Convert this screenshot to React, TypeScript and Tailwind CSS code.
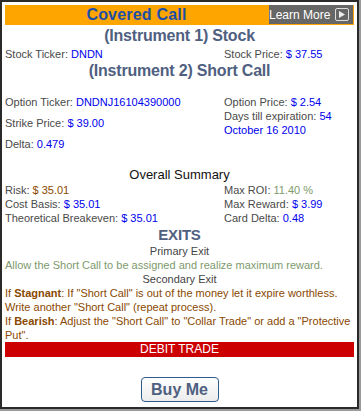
import { Fragment } from "react";

const label = "text-[#4a4a4a]";
const val = "text-[#0000ee]";
const brown = "text-[#8a4800]";
const heading = "text-center font-bold text-[#4f6080] tracking-[-0.2px]";

function Row({ name, value, color = val }: { name: string; value: string; color?: string }) {
  return (
    <div className="whitespace-nowrap">
      <span className={label}>{name}: </span>
      <span className={color}>{value}</span>
    </div>
  );
}

export default function App() {
  return (
    <div
      className="w-[361px] h-[411px] bg-white border-r-2 border-b-2 border-[#9a9a9a]"
      style={{ fontFamily: '"Liberation Sans", Arial, sans-serif' }}
    >
      <div className="h-full border-2 border-[#2a2a2a] px-[3px] pt-[3px] text-[11px] leading-[14px]">
        <div className="relative h-5 bg-[#ffa500] flex items-center justify-center pr-[86px]">
          <span className="text-[16px] font-bold text-[#1c4fa8] tracking-[0.2px]">Covered Call</span>
          <div className="absolute right-[1px] top-0 h-[19px] w-[84px] bg-[#666666] flex items-center justify-end gap-[5px] pr-[4px]">
            <span className="text-white text-[12px] whitespace-nowrap">Learn More</span>
            <span className="w-[14px] h-[13px] border border-[#ddd] rounded-[2px] flex items-center justify-center">
              <svg width="6" height="7" viewBox="0 0 6 7">
                <path d="M0 0 L6 3.5 L0 7 Z" fill="#eee" />
              </svg>
            </span>
          </div>
        </div>

        <div className={`${heading} text-[16px] leading-[22px]`}>(Instrument 1) Stock</div>
        <div className="flex">
          <div className="w-[219px]">
            <Row name="Stock Ticker" value="DNDN" />
          </div>
          <Row name="Stock Price" value="$ 37.55" />
        </div>
        <div className={`${heading} text-[16px] leading-[20px]`}>(Instrument 2) Short Call</div>

        <div className="flex mt-[11px]">
          <div className="w-[219px] leading-[21px]">
            <Row name="Option Ticker" value="DNDNJ16104390000" />
            <Row name="Strike Price" value="$ 39.00" />
            <Row name="Delta" value="0.479" />
          </div>
          <div className="pt-[3px]">
            <Row name="Option Price" value="$ 2.54" />
            <Row name="Days till expiration" value="54" />
            <div className={val}>October 16 2010</div>
          </div>
        </div>

        <div className="text-center text-[13px] leading-[16px] text-[#111] mt-[12px]">Overall Summary</div>
        <div className="flex">
          <div className="w-[219px]">
            <Row name="Risk" value="$ 35.01" color={brown} />
            <Row name="Cost Basis" value="$ 35.01" />
            <Row name="Theoretical Breakeven" value="$ 35.01" />
          </div>
          <div>
            <Row name="Max ROI" value="11.40 %" color="text-[#7e9a6c]" />
            <Row name="Max Reward" value="$ 3.99" />
            <Row name="Card Delta" value="0.48" />
          </div>
        </div>

        <div className={`${heading} text-[15px] leading-[19px]`}>EXITS</div>
        <div className="text-center text-[#444]">Primary Exit</div>
        <div className="text-[#7e9a6c]">Allow the Short Call to be assigned and realize maximum reward.</div>
        <div className="text-center text-[#444]">Secondary Exit</div>
        <div className={`${brown} whitespace-nowrap`}>
          {[
            ["Stagnant", ': If "Short Call" is out of the money let it expire worthless.', 'Write another "Short Call" (repeat process).'],
            ["Bearish", ': Adjust the "Short Call" to "Collar Trade" or add a "Protective', 'Put".'],
          ].map(([b, a, c]) => (
            <Fragment key={b}>
              <div>
                If <b>{b}</b>
                {a}
              </div>
              <div>{c}</div>
            </Fragment>
          ))}
        </div>

        <div className="h-[15px] bg-[#cc0000] text-white text-center text-[12px] leading-[15px]">DEBIT TRADE</div>

        <div className="flex justify-center mt-[20px]">
          <button className="w-[78px] h-[25px] rounded-[4px] border border-[#2f5a8a] bg-gradient-to-b from-white to-[#ececec] text-[16px] font-bold text-[#4f6080] leading-[22px]">
            Buy Me
          </button>
        </div>
      </div>
    </div>
  );
}
